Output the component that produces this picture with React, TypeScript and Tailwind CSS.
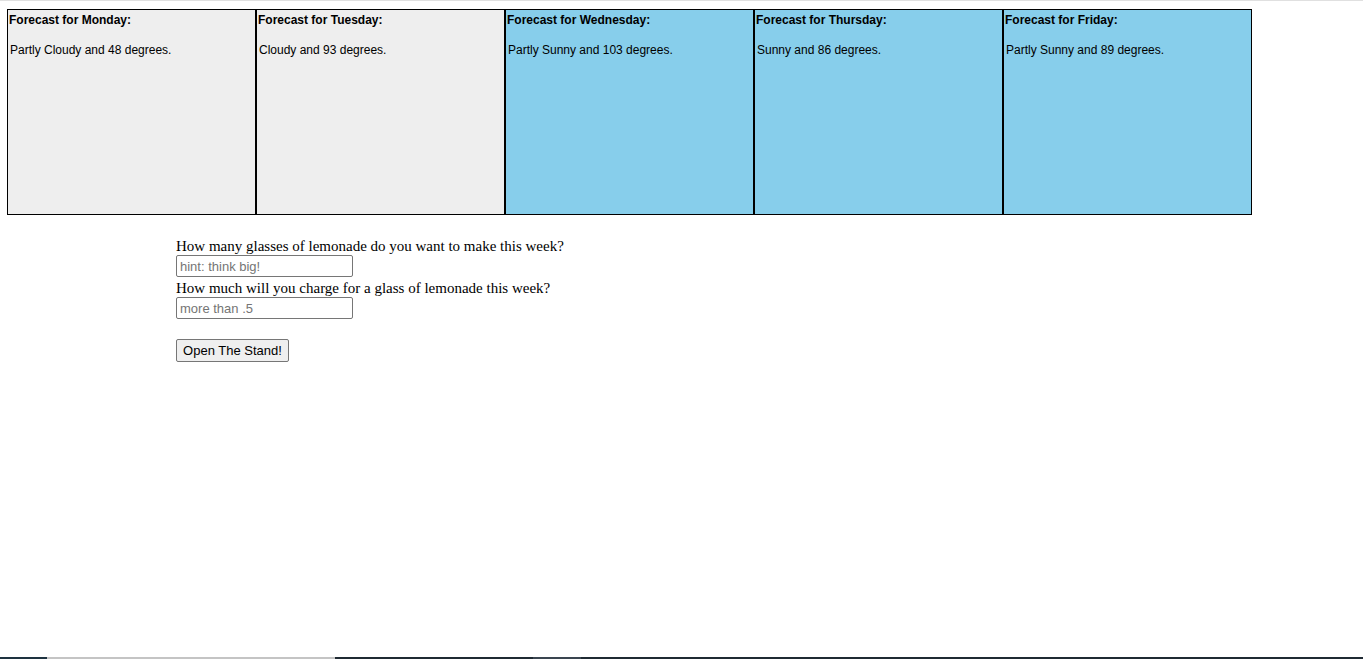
import React from "react";

const days = [
  { day: "Monday", text: "Partly Cloudy and 48 degrees.", bg: "bg-[#eeeeee]" },
  { day: "Tuesday", text: "Cloudy and 93 degrees.", bg: "bg-[#eeeeee]" },
  { day: "Wednesday", text: "Partly Sunny and 103 degrees.", bg: "bg-[#87ceeb]" },
  { day: "Thursday", text: "Sunny and 86 degrees.", bg: "bg-[#87ceeb]" },
  { day: "Friday", text: "Partly Sunny and 89 degrees.", bg: "bg-[#87ceeb]" },
];

export default function App() {
  return (
    <div className="min-h-screen flex flex-col bg-white text-black" style={{ fontFamily: '"Liberation Serif", serif' }}>
      <div className="h-px bg-[#e0e0e0]" />
      <div className="flex pl-[7px] pt-[8px]">
        {days.map((d) => (
          <div
            key={d.day}
            className={`w-[249px] h-[206px] border border-black ${d.bg} pl-[1px] pt-[3px] text-[12px] leading-[14px]`}
            style={{ fontFamily: '"Liberation Sans", Arial, sans-serif' }}
          >
            <div className="font-bold">Forecast for {d.day}:</div>
            <div className="mt-[16px] pl-[1px]">{d.text}</div>
          </div>
        ))}
      </div>
      <div className="pl-[176px] pt-[22px] text-[15px] leading-[18px]">
        <div>How many glasses of lemonade do you want to make this week?</div>
        <input
          type="text"
          placeholder="hint: think big!"
          className="block w-[177px] h-[22px] border border-[#767676] rounded-[2px] px-[3px] text-[13px] placeholder:text-[#757575] outline-none"
          style={{ fontFamily: '"Liberation Sans", Arial, sans-serif' }}
        />
        <div className="mt-[2px]">How much will you charge for a glass of lemonade this week?</div>
        <input
          type="text"
          placeholder="more than .5"
          className="block w-[177px] h-[22px] border border-[#767676] rounded-[2px] px-[3px] text-[13px] placeholder:text-[#757575] outline-none"
          style={{ fontFamily: '"Liberation Sans", Arial, sans-serif' }}
        />
        <button
          className="mt-[20px] w-[113px] h-[23px] border border-[#767676] rounded-[2px] bg-[#efefef] text-[13px] leading-[20px] text-black"
          style={{ fontFamily: '"Liberation Sans", Arial, sans-serif' }}
        >
          Open The Stand!
        </button>
      </div>
      <div className="flex-1" />
      <div className="flex h-[2px]">
        <div className="w-[47px] bg-[#1e3340]" />
        <div className="w-[288px] bg-[#c4c4c4]" />
        <div className="w-[198px] bg-[#1f2a33]" />
        <div className="w-[48px] bg-[#3a4550]" />
        <div className="flex-1 bg-[#1f2a33]" />
      </div>
    </div>
  );
}
